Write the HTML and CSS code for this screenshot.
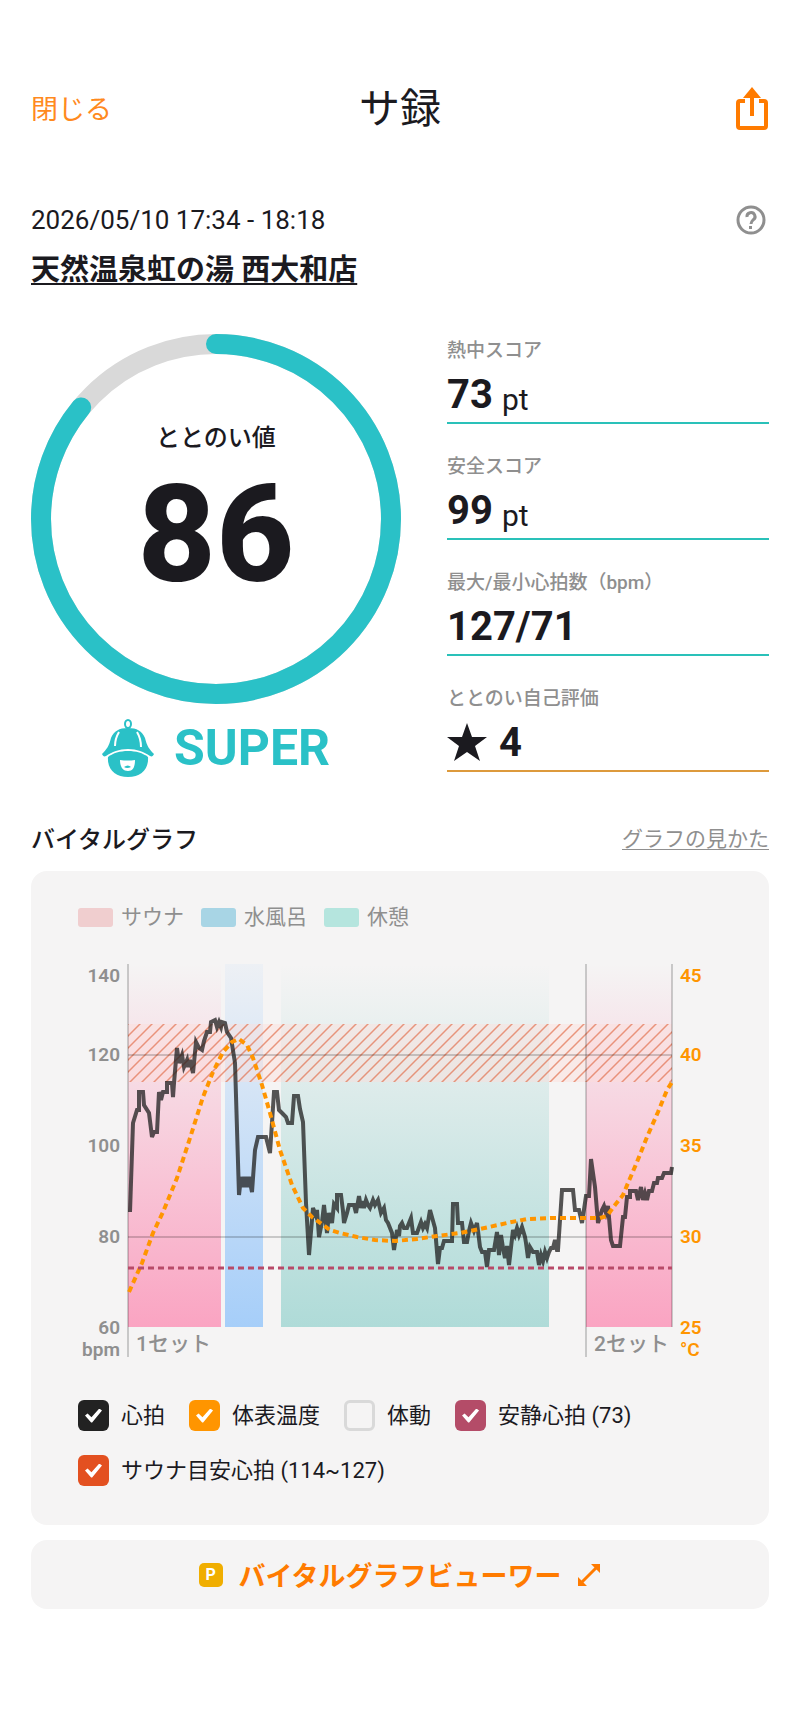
FILE: index.html
```html
<!DOCTYPE html>
<html lang="ja">

<head>
    <meta charset="utf-8">
    <meta name="viewport" content="width=device-width, initial-scale=1">
    <title>サ録</title>
    <link rel="stylesheet" href="styles.css">
</head>

<body>
    <header class="top-bar">
        <button type="button" class="close">閉じる</button>
        <h1>サ録</h1>
        <button type="button" class="share" aria-label="共有">
            <svg width="34" height="44" viewBox="0 0 34 44">
                <path d="M10 14H5a2 2 0 0 0-2 2v23a2 2 0 0 0 2 2h24a2 2 0 0 0 2-2V16a2 2 0 0 0-2-2h-5" fill="none" stroke="currentColor" stroke-width="4"/>
                <path d="M17 6v23" fill="none" stroke="currentColor" stroke-width="4"/>
                <path d="M17 0l9 11H8z" fill="currentColor"/>
            </svg>
        </button>
    </header>
    <main>
        <div class="session">
            <span class="date">2026/05/10 17:34 - 18:18</span>
            <button type="button" class="help" aria-label="ヘルプ">
                <svg width="30" height="30" viewBox="0 0 30 30">
                    <circle cx="15" cy="15" r="13" fill="none" stroke="currentColor" stroke-width="3"/>
                    <path d="M11 12a4 4 0 1 1 6 3c-1 1-2 2-2 4" fill="none" stroke="currentColor" stroke-width="3"/>
                    <rect x="13" y="21" width="3" height="3" fill="currentColor"/>
                </svg>
            </button>
        </div>
        <a class="place" href="#">天然温泉虹の湯 西大和店</a>

        <section class="summary">
            <div class="total">
                <div class="ring">
                    <svg viewBox="0 0 370 370">
                        <circle class="ring-track" cx="185" cy="185" r="175"/>
                        <circle class="ring-value" cx="185" cy="185" r="175" pathLength="100" stroke-dasharray="86 14" transform="rotate(-90 185 185)"/>
                    </svg>
                    <div class="ring-text">
                        <span class="ring-label">ととのい値</span>
                        <span class="ring-score">86</span>
                    </div>
                </div>
                <div class="rank">
                    <svg width="52" height="58" viewBox="0 0 52 58">
                        <ellipse cx="26" cy="5" rx="3" ry="4" fill="none" stroke="currentColor" stroke-width="2"/>
                        <path d="M26 9c-9 0-14 3-17 10C7 27 5 30 0 35c1 2 2 3 4 2 6-4 13-7 22-7s16 3 22 7c2 1 3 0 4-2-5-5-7-8-9-16C40 12 35 9 26 9z" fill="currentColor"/>
                        <path d="M6 38c5-4 12-6 20-6s15 2 20 6c1 12-7 20-20 20S5 50 6 38z" fill="currentColor"/>
                        <path d="M17 13c-3 5-4 10-4 14M35 13c3 5 4 10 4 15" fill="none" stroke="#fff" stroke-width="2"/>
                        <path d="M18 41q8 1 15 0c0 7-2 11-7 11s-8-4-8-11z" fill="#fff"/>
                        <path d="M22 48q4-3 7 0-4 2-7 0z" fill="currentColor"/>
                    </svg>
                    <span>SUPER</span>
                </div>
            </div>
            <dl class="stats">
                <div class="stat">
                    <dt>熱中スコア</dt>
                    <dd><b>73</b><span class="unit">pt</span></dd>
                </div>
                <div class="stat">
                    <dt>安全スコア</dt>
                    <dd><b>99</b><span class="unit">pt</span></dd>
                </div>
                <div class="stat">
                    <dt>最大/最小心拍数（bpm）</dt>
                    <dd><b>127/71</b></dd>
                </div>
                <div class="stat stat-self">
                    <dt>ととのい自己評価</dt>
                    <dd>
                        <svg width="40" height="38" viewBox="0 0 40 38"><path d="M20 0l5 14h15L28 23l5 15-13-9-13 9 5-15L0 14h15z" fill="currentColor"/></svg>
                        <b>4</b>
                    </dd>
                </div>
            </dl>
        </section>

        <div class="graph-head">
            <h2>バイタルグラフ</h2>
            <a href="#">グラフの見かた</a>
        </div>

        <section class="card">
            <ul class="legend">
                <li><i class="swatch sauna"></i>サウナ</li>
                <li><i class="swatch water"></i>水風呂</li>
                <li><i class="swatch rest"></i>休憩</li>
            </ul>
            <svg class="chart" viewBox="0 0 644 404">
                <defs>
                    <linearGradient id="pink" x1="0" y1="0" x2="0" y2="1">
                        <stop offset="0" stop-color="#faa4c2" stop-opacity="0"/>
                        <stop offset="1" stop-color="#faa4c2"/>
                    </linearGradient>
                    <linearGradient id="blue" x1="0" y1="0" x2="0" y2="1">
                        <stop offset="0" stop-color="#a6cef9" stop-opacity="0.1"/>
                        <stop offset="1" stop-color="#a6cef9"/>
                    </linearGradient>
                    <linearGradient id="green" x1="0" y1="0" x2="0" y2="1">
                        <stop offset="0" stop-color="#afdbd8" stop-opacity="0"/>
                        <stop offset="1" stop-color="#afdbd8"/>
                    </linearGradient>
                    <pattern id="hatch" width="12" height="12" patternUnits="userSpaceOnUse">
                        <path d="M-1 13L13-1M-1 1L1-1M11 13L13 11" stroke="#e2714f" stroke-width="1.5"/>
                    </pattern>
                </defs>
                <g transform="translate(50 1)">
                    <rect x="0" y="0" width="93" height="363" fill="url(#pink)"/>
                    <rect x="97" y="0" width="38" height="363" fill="url(#blue)"/>
                    <rect x="153" y="0" width="268" height="363" fill="url(#green)"/>
                    <rect x="458" y="0" width="86" height="363" fill="url(#pink)"/>
                    <rect x="0" y="60" width="544" height="58" fill="#ffdcd8" opacity="0.4"/>
                    <rect x="0" y="60" width="544" height="58" fill="url(#hatch)" opacity="0.7"/>
                    <path class="grid" d="M0 91H544M0 273H544"/>
                    <path class="axis" d="M0 0V393M458 0V393M544 0V363"/>
                    <polyline class="heart" points="2,248 5,159 9,146 11,146 11,128 15,128 16,141 21,149 24,173 26,168 29,168 31,128 33,136 35,128 39,128 39,119 44,119 45,133 46,119 49,84 51,99 54,91 56,103 59,96 60,103 62,96 65,109 68,78 71,84 74,86 76,77 79,68 82,68 83,58 87,56 89,63 91,58 93,63 94,58 97,59 99,68 103,74 107,99 111,231 113,213 115,223 117,213 119,223 121,213 124,228 127,186 130,173 138,173 142,189 146,128 149,128 151,146 155,150 158,153 160,159 164,159 166,132 170,132 172,145 175,158 178,239 181,291 185,244 188,252 189,246 191,273 194,258 196,241 199,269 201,249 204,259 206,240 209,244 209,231 213,231 215,247 216,259 219,249 221,241 226,241 228,249 231,232 233,244 235,237 236,244 238,236 240,241 242,244 245,236 247,241 250,236 253,249 256,244 258,256 260,259 264,269 266,286 269,266 271,272 272,262 274,259 276,264 279,264 283,254 285,269 289,269 293,258 295,264 297,260 299,264 302,246 307,264 310,300 312,284 314,284 316,277 324,277 325,240 329,240 330,259 334,259 336,278 339,278 341,267 343,259 346,267 349,259 352,283 354,288 357,288 359,303 361,286 366,286 369,268 371,291 373,271 375,284 377,294 379,282 381,301 385,266 387,271 389,264 391,271 394,263 397,273 398,279 400,294 402,283 405,288 409,288 411,301 413,291 415,297 417,288 419,294 421,288 423,284 425,284 427,276 429,286 430,286 434,226 445,226 447,246 451,246 454,259 458,232 461,232 463,195 467,223 470,259 474,246 476,242 478,249 480,242 483,276 485,282 492,282 495,253 497,253 499,233 502,233 502,227 508,227 510,236 513,223 515,236 517,229 519,236 521,227 524,227 526,219 529,219 530,214 534,214 536,209 543,209 544,203"/>
                    <polyline class="temperature" points="1,328 14,299 25,269 35,248 49,214 62,174 75,133 85,108 95,88 104,78 111,75 119,81 125,94 134,121 142,149 152,186 164,221 175,244 184,253 202,266 212,269 229,273 247,276 267,277 289,275 309,272 332,269 352,265 379,259 399,255 425,254 472,254 479,252 487,241 495,231 500,219 509,198 519,173 530,148 539,126 544,118"/>
                    <path class="resting" d="M0 304H544"/>
                </g>
                <g class="bpm">
                    <text x="42" y="19">140</text>
                    <text x="42" y="98">120</text>
                    <text x="42" y="189">100</text>
                    <text x="42" y="280">80</text>
                    <text x="42" y="371">60</text>
                    <text x="42" y="393">bpm</text>
                </g>
                <g class="celsius">
                    <text x="602" y="19">45</text>
                    <text x="602" y="98">40</text>
                    <text x="602" y="189">35</text>
                    <text x="602" y="280">30</text>
                    <text x="602" y="371">25</text>
                    <text x="602" y="393">°C</text>
                </g>
                <g class="sets">
                    <text x="58" y="388">1セット</text>
                    <text x="516" y="388">2セット</text>
                </g>
            </svg>
            <div class="toggles">
                <label><input type="checkbox" class="c-heart" checked>心拍</label>
                <label><input type="checkbox" class="c-temperature" checked>体表温度</label>
                <label><input type="checkbox">体動</label>
                <label><input type="checkbox" class="c-resting" checked>安静心拍 (73)</label>
                <label><input type="checkbox" class="c-target" checked>サウナ目安心拍 (114~127)</label>
            </div>
        </section>

        <button type="button" class="viewer">
            <span class="premium">P</span>
            バイタルグラフビューワー
            <svg width="24" height="24" viewBox="0 0 24 24">
                <path d="M4 20L20 4" stroke="currentColor" stroke-width="3"/>
                <path d="M14 1h9v9zM1 14v9h9z" fill="currentColor"/>
            </svg>
        </button>
    </main>
</body>

</html>
```
FILE: styles.css
```css
* {
    box-sizing: border-box;
}

body {
    margin: 0;
    padding: 80px 31px;
    background: #fff;
    color: #1b1a1f;
    font-family: Roboto, "Noto Sans CJK JP", sans-serif;
}

h1, h2, ul, dl, dd {
    margin: 0;
    padding: 0;
}

button {
    border: none;
    padding: 0;
    background: none;
    font: inherit;
    color: inherit;
}

svg {
    display: block;
}

.top-bar {
    display: grid;
    grid-template-columns: 1fr auto 1fr;
    align-items: center;
    height: 58px;
}

.top-bar h1 {
    font-size: 41px;
    font-weight: 400;
    line-height: 56px;
}

.close {
    justify-self: start;
    padding-bottom: 4px;
    font-size: 27px;
    color: #ff8a1e;
}

.share {
    justify-self: end;
    color: #ff7b00;
}

.session {
    display: flex;
    align-items: center;
    justify-content: space-between;
    height: 32px;
    margin-top: 66px;
}

.date {
    font-size: 26px;
}

.help {
    color: #8f8f8f;
    margin-right: 3px;
}

.place {
    display: inline-block;
    margin-top: 14px;
    font-size: 29px;
    font-weight: 700;
    line-height: 40px;
    color: inherit;
    text-decoration-thickness: 2px;
    text-underline-offset: 3px;
}

.summary {
    display: grid;
    grid-template-columns: 370fr 322fr;
    column-gap: 46px;
    margin-top: 44px;
}

.ring {
    display: grid;
}

.ring > * {
    grid-area: 1 / 1;
}

.ring circle {
    fill: none;
    stroke-width: 20px;
}

.ring-track {
    stroke: #d9d9d9;
}

.ring-value {
    stroke: #2ac1c7;
    stroke-linecap: round;
}

.ring-text {
    display: flex;
    flex-direction: column;
    align-items: center;
    padding-top: 86px;
}

.ring-label {
    font-size: 24px;
    font-weight: 500;
    line-height: 36px;
}

.ring-score {
    font-size: 136px;
    font-weight: 800;
    line-height: 158px;
}

.rank {
    display: flex;
    align-items: center;
    justify-content: center;
    gap: 20px;
    margin-top: 14px;
    color: #2ac1c7;
    font-size: 50px;
    font-weight: 700;
    line-height: 60px;
}

.stats {
    display: flex;
    flex-direction: column;
    gap: 32px;
    padding-top: 6px;
}

.stat {
    border-bottom: 2px solid #2ac1b9;
    height: 84px;
}

.stat-self {
    border-color: #dd9a3c;
}

.stat dt {
    font-size: 19px;
    font-weight: 500;
    line-height: 22px;
    color: #8f8f8f;
}

.stat dd {
    display: flex;
    align-items: center;
    height: 48px;
    margin-top: 8px;
    font-size: 40px;
}

.stat svg {
    margin-right: 12px;
}

.unit {
    align-self: flex-end;
    margin-left: 9px;
    font-size: 30px;
    line-height: 36px;
}

.graph-head {
    display: flex;
    align-items: center;
    justify-content: space-between;
    height: 36px;
    margin-top: 41px;
}

.graph-head h2 {
    font-size: 24px;
    font-weight: 500;
}

.graph-head a {
    font-size: 21px;
    color: #8f8f8f;
    text-decoration-thickness: 1px;
    text-underline-offset: 3px;
}

.card {
    margin-top: 16px;
    padding: 30px 47px 39px;
    border-radius: 16px;
    background: #f5f4f4;
}

.legend {
    display: flex;
    gap: 17px;
    list-style: none;
    font-size: 21px;
    line-height: 32px;
    color: #8f8f8f;
}

.legend li {
    display: flex;
    align-items: center;
    gap: 8px;
}

.swatch {
    width: 35px;
    height: 19px;
    border-radius: 3px;
}

.sauna {
    background: #f0cecf;
}

.water {
    background: #a8d5e5;
}

.rest {
    background: #b5e5de;
}

.chart {
    width: 100%;
    margin-top: 30px;
    font-size: 19px;
    font-weight: 600;
}

.grid, .axis {
    fill: none;
    stroke: #000;
    stroke-opacity: 0.18;
    stroke-width: 2;
}

.heart {
    fill: none;
    stroke: #1d1d1d;
    stroke-opacity: 0.75;
    stroke-width: 4;
}

.temperature {
    fill: none;
    stroke: #ff9500;
    stroke-width: 4;
    stroke-dasharray: 6 4;
}

.resting {
    stroke: #b84a68;
    stroke-width: 3;
    stroke-dasharray: 6 4;
}

.bpm {
    fill: #8f8f8f;
    text-anchor: end;
}

.celsius {
    fill: #ff9500;
}

.sets {
    fill: #8f8f8f;
    font-size: 21px;
    font-weight: 500;
}

.toggles {
    display: flex;
    flex-wrap: wrap;
    gap: 24px;
    margin-top: 33px;
}

.toggles label {
    display: flex;
    align-items: center;
    gap: 12px;
    font-size: 22px;
    line-height: 31px;
}

.toggles input {
    display: grid;
    place-items: center;
    appearance: none;
    width: 31px;
    height: 31px;
    margin: 0;
    border: 3px solid #d9d9d9;
    border-radius: 6px;
}

.toggles input:checked {
    border: none;
}

.toggles input:checked::before {
    content: "";
    width: 17px;
    height: 14px;
    background: #fff;
    clip-path: polygon(0 50%, 15% 35%, 38% 62%, 84% 0, 100% 14%, 42% 100%, 36% 100%);
}

.c-heart {
    background: #222;
}

.c-temperature {
    background: #ff9500;
}

.c-resting {
    background: #b44c68;
}

.c-target {
    background: #e35020;
}

.viewer {
    display: flex;
    align-items: center;
    justify-content: center;
    gap: 16px;
    width: 100%;
    height: 69px;
    margin-top: 15px;
    border-radius: 16px;
    background: #f5f4f4;
    color: #ff7b00;
    font-size: 27px;
    font-weight: 700;
}

.premium {
    width: 24px;
    height: 24px;
    border-radius: 5px;
    background: #f0ae00;
    color: #fff;
    font-size: 16px;
    line-height: 24px;
}
```
